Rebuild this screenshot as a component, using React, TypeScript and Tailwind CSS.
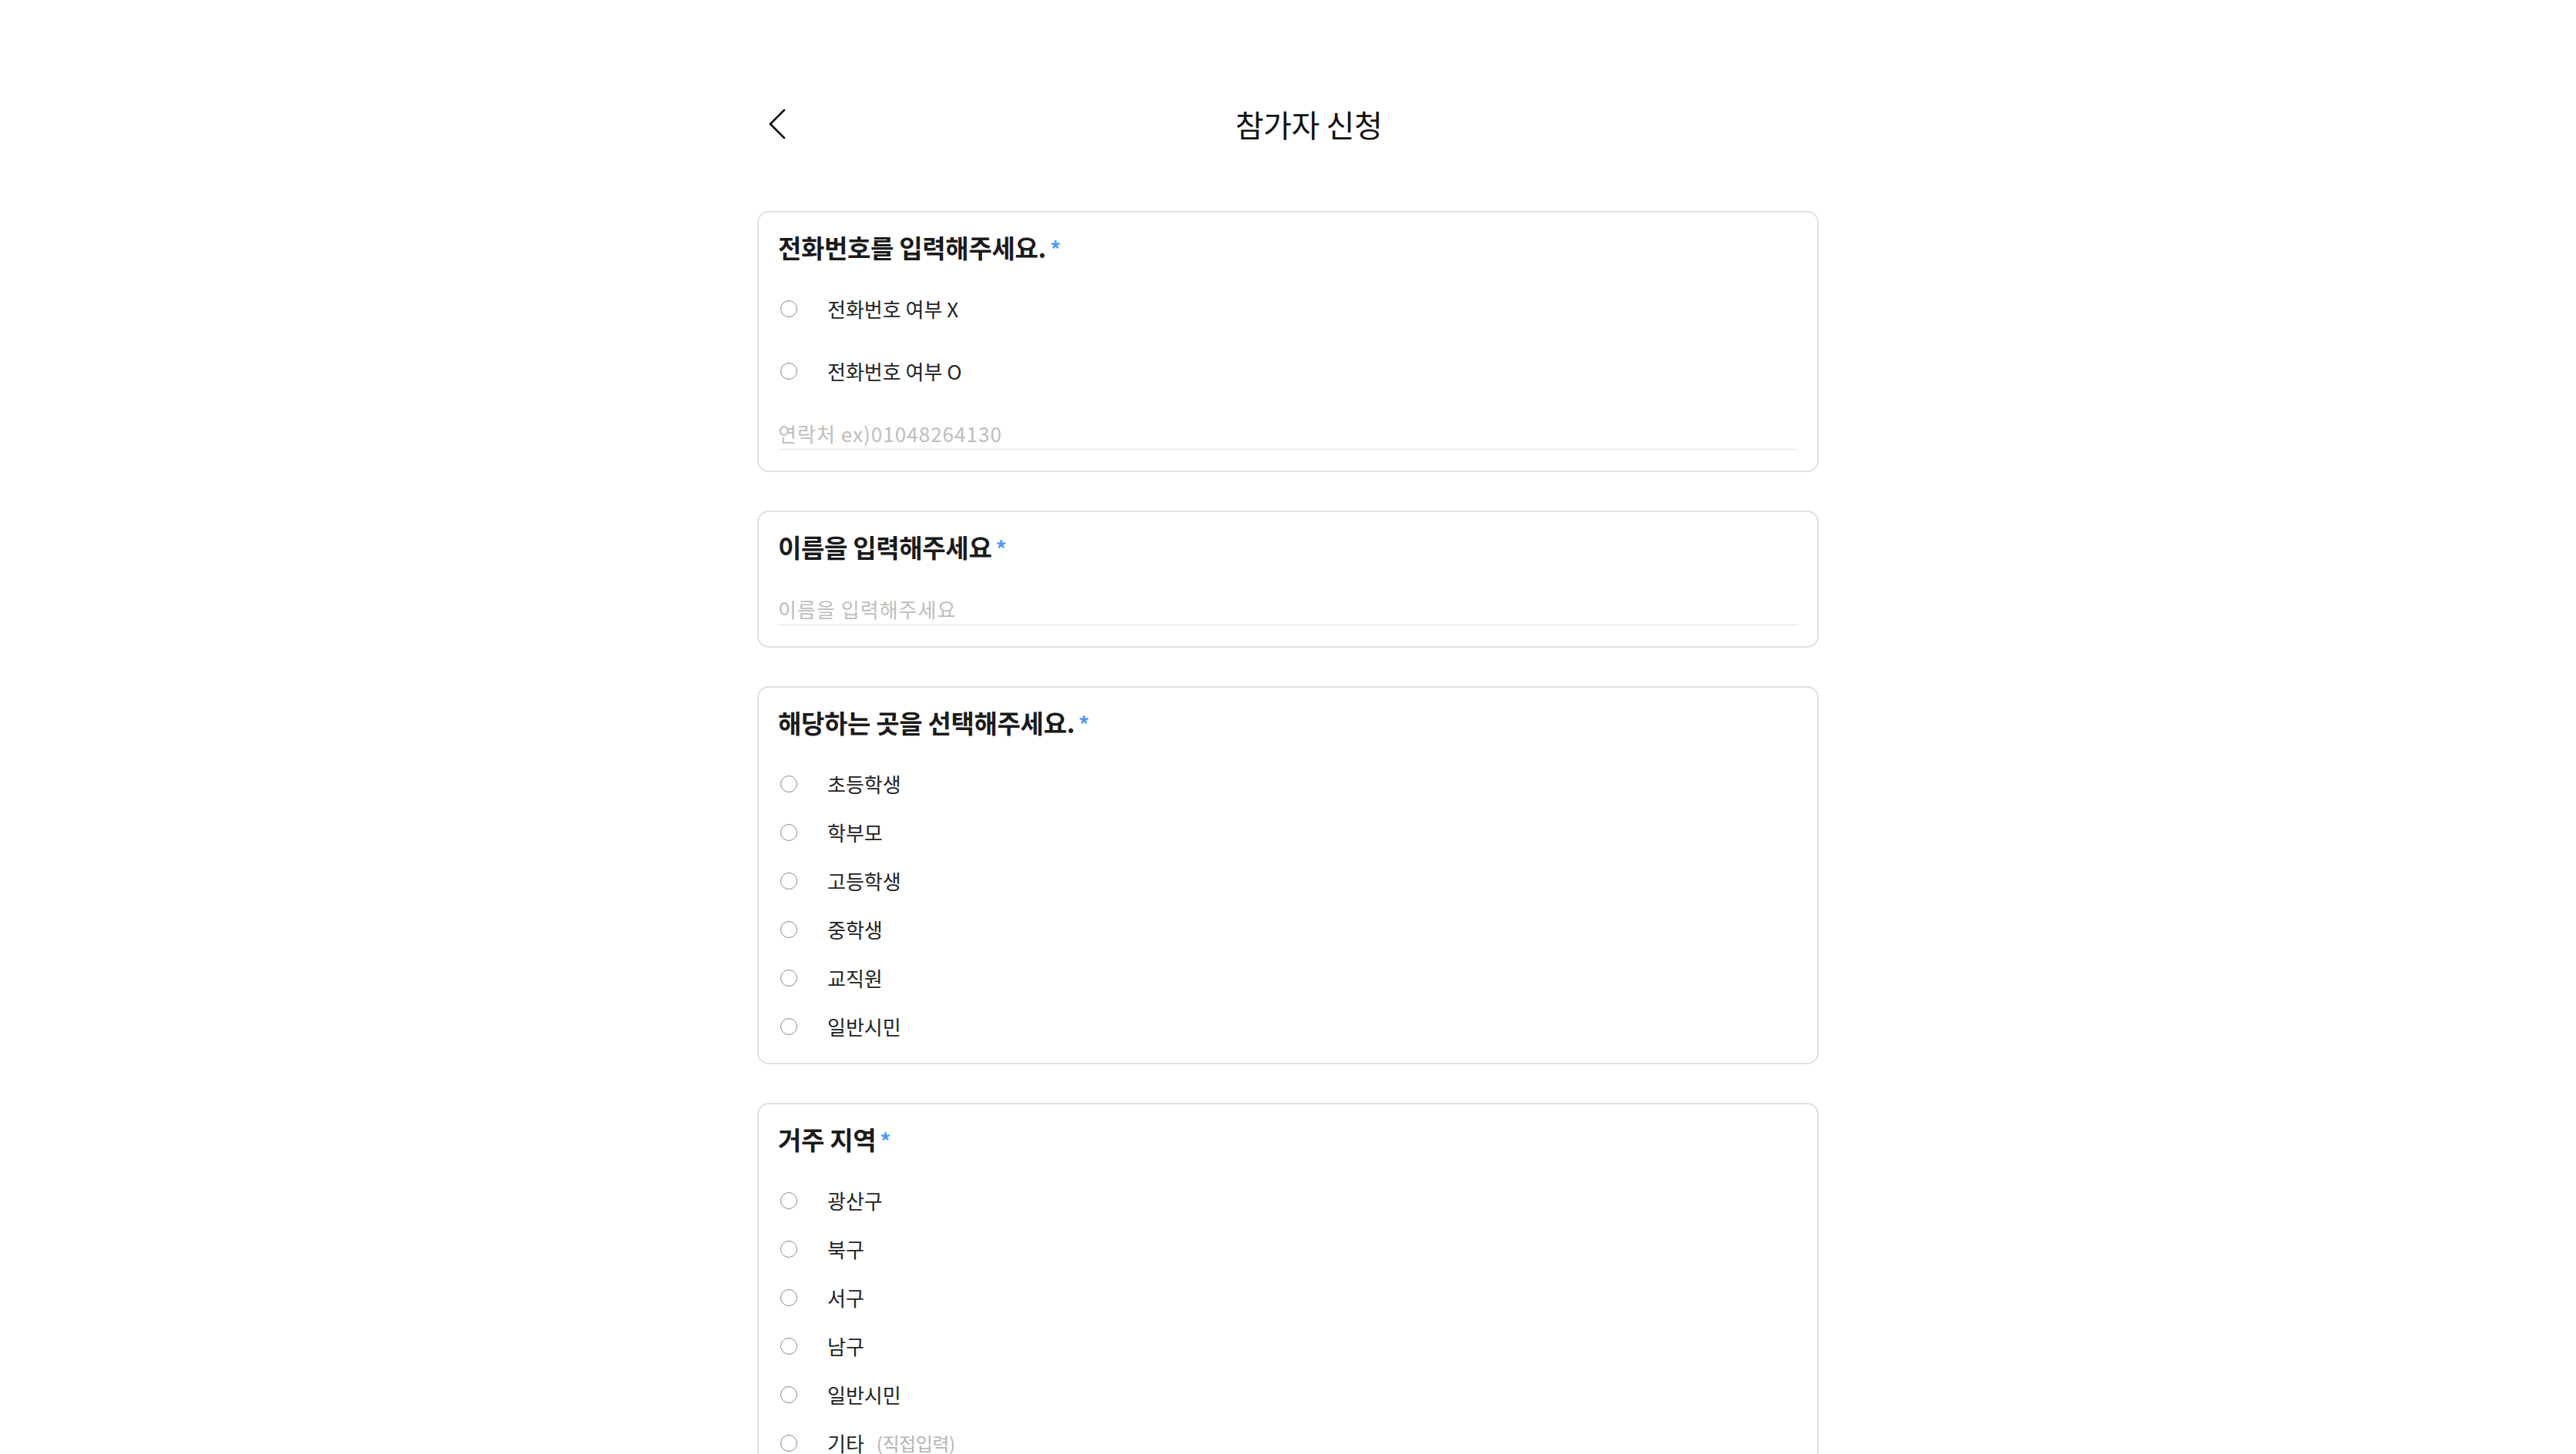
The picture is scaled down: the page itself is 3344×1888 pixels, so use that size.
import React from "react";

function Req() {
  return <span className="ml-[5px] text-[28px] leading-none text-[#4f9bf6]">*</span>;
}

function Radio({ label, extra }: { label: string; extra?: string }) {
  return (
    <label className="flex h-[40px] items-center">
      <input
        type="radio"
        name={label}
        className="ml-[3px] h-[22px] w-[22px] shrink-0 appearance-none rounded-full border-[1.5px] border-[#8c8c8c] bg-white"
      />
      <span className="ml-[39px] text-[26px] leading-[40px] text-[#222]">{label}</span>
      {extra && (
        <span className="ml-[16px] text-[24px] leading-[40px] tracking-[-0.02em] text-[#b3b3b3]">{extra}</span>
      )}
    </label>
  );
}

function Heading({ children }: { children: React.ReactNode }) {
  return (
    <h2 className="h-[40px] text-[33px] font-bold leading-[40px] tracking-[-0.01em] text-[#1b1b1b]">
      {children}
      <Req />
    </h2>
  );
}

function Card({ children }: { children: React.ReactNode }) {
  return (
    <section className="flex flex-col rounded-[15px] border-2 border-[#e0e0e0] bg-white px-[25px] pt-[25px] pb-[27px]">
      {children}
    </section>
  );
}

function TextInput({ placeholder }: { placeholder: string }) {
  return (
    <input
      type="text"
      placeholder={placeholder}
      className="h-[42px] w-full border-b border-[#e6e6e6] bg-transparent text-[26px] tracking-[0.04em] text-[#222] outline-none placeholder:text-[#bdbdbd]"
    />
  );
}

export default function App() {
  const groups = ["초등학생", "학부모", "고등학생", "중학생", "교직원", "일반시민"];
  const regions = ["광산구", "북구", "서구", "남구", "일반시민"];
  return (
    <div className="min-h-screen w-full bg-white font-['Noto_Sans_CJK_KR','Noto_Sans',sans-serif]">
      <div className="mx-auto w-[1378px] pt-[121px] pb-[80px]">
        <header className="flex h-[80px] items-center">
          <button className="flex h-[80px] w-[54px] shrink-0 items-center pl-[14px]" aria-label="back">
            <svg width="24" height="40" viewBox="0 0 24 40" fill="none">
              <path d="M21 2 L3 20 L21 38" stroke="#111" strokeWidth="2.6" strokeLinecap="round" strokeLinejoin="round" />
            </svg>
          </button>
          <h1 className="flex-1 text-center text-[40px] font-normal leading-[80px] tracking-[-0.01em] text-[#111]">
            참가자 신청
          </h1>
        </header>

        <div className="mt-[73px] flex flex-col gap-[50px]">
          <Card>
            <Heading>전화번호를 입력해주세요.</Heading>
            <div className="mt-[40px] flex flex-col gap-[41px]">
              <Radio label="전화번호 여부 X" />
              <Radio label="전화번호 여부 O" />
            </div>
            <div className="mt-[40px]">
              <TextInput placeholder="연락처 ex)01048264130" />
            </div>
          </Card>

          <Card>
            <Heading>이름을 입력해주세요</Heading>
            <div className="mt-[40px]">
              <TextInput placeholder="이름을 입력해주세요" />
            </div>
          </Card>

          <Card>
            <Heading>해당하는 곳을 선택해주세요.</Heading>
            <div className="mt-[40px] flex flex-col gap-[23px]">
              {groups.map((g) => (
                <Radio key={g} label={g} />
              ))}
            </div>
          </Card>

          <Card>
            <Heading>거주 지역</Heading>
            <div className="mt-[40px] flex flex-col gap-[23px]">
              {regions.map((g) => (
                <Radio key={g} label={g} />
              ))}
              <Radio label="기타" extra="(직접입력)" />
            </div>
          </Card>
        </div>
      </div>
    </div>
  );
}
